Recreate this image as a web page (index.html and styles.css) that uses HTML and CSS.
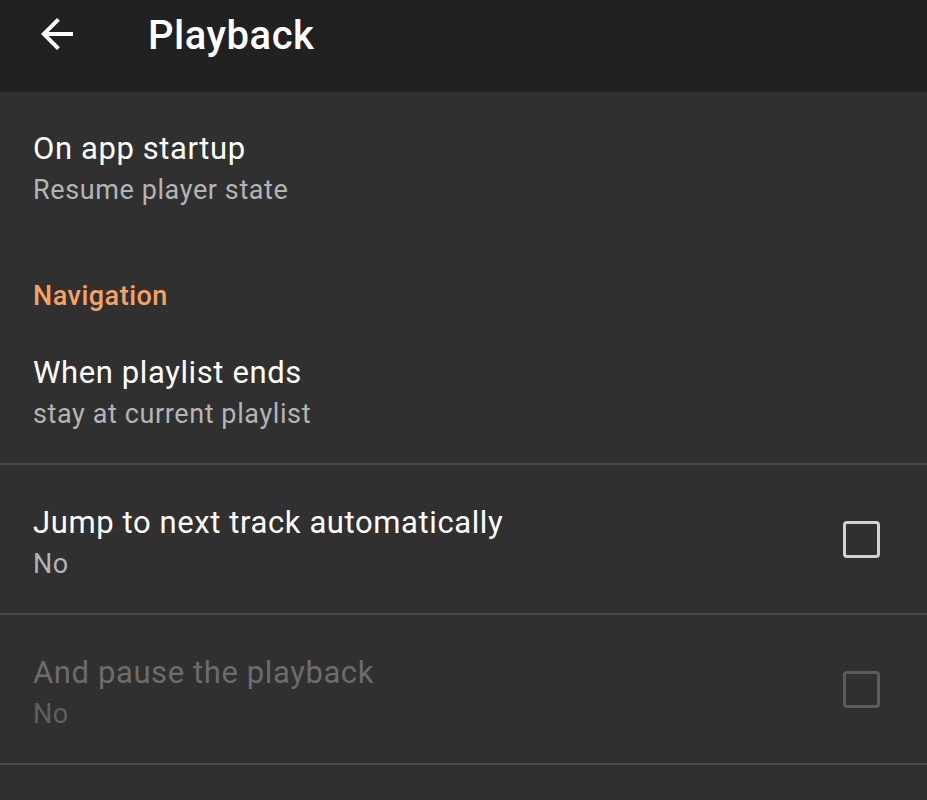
FILE: index.html
```html
<!DOCTYPE html>
<html>
<head>
<meta charset="utf-8">
<link rel="stylesheet" href="styles.css">
</head>
<body>
<div class="app">
  <header class="toolbar">
    <button class="back" aria-label="Back">
      <svg width="48" height="48" viewBox="0 0 24 24"><path d="M20 11H7.83l5.59-5.59L12 4l-8 8 8 8 1.41-1.41L7.83 13H20v-2z" fill="#fff"/></svg>
    </button>
    <h1 class="title">Playback</h1>
  </header>
  <main class="prefs">
    <div class="pref pref-first">
      <div class="pref-text">
        <div class="pref-title">On app startup</div>
        <div class="pref-summary">Resume player state</div>
      </div>
    </div>
    <div class="category">Navigation</div>
    <div class="pref pref-nav divided">
      <div class="pref-text">
        <div class="pref-title">When playlist ends</div>
        <div class="pref-summary">stay at current playlist</div>
      </div>
    </div>
    <div class="pref pref-check divided">
      <div class="pref-text">
        <div class="pref-title">Jump to next track automatically</div>
        <div class="pref-summary">No</div>
      </div>
      <span class="checkbox"></span>
    </div>
    <div class="pref pref-check divided disabled">
      <div class="pref-text">
        <div class="pref-title">And pause the playback</div>
        <div class="pref-summary">No</div>
      </div>
      <span class="checkbox"></span>
    </div>
  </main>
</div>
</body>
</html>
```

FILE: styles.css
```css
* { box-sizing: border-box; }
html, body { margin: 0; padding: 0; }
body {
  background: #303030;
  font-family: Roboto, "Noto Sans", sans-serif;
  color: #fff;
  width: 927px;
  height: 800px;
  overflow: hidden;
}
.toolbar {
  height: 92px;
  background: #212121;
  display: flex;
  align-items: flex-start;
}
.back {
  background: none;
  border: 0;
  padding: 0;
  margin: 10px 0 0 33px;
  width: 48px;
  height: 48px;
  display: flex;
}
.title {
  margin: 13px 0 0 67px;
  font-size: 40px;
  font-weight: 500;
  letter-spacing: 0.5px;
  line-height: 46px;
  color: #fff;
}
.prefs { display: flex; flex-direction: column; }
.pref {
  display: flex;
  align-items: center;
  padding-left: 33px;
  padding-right: 47px;
}
.pref-text { flex: 1; }
.pref-title {
  font-size: 31px;
  letter-spacing: 0.6px;
  line-height: 36px;
  color: #fff;
}
.pref-summary {
  font-size: 27px;
  letter-spacing: 0.6px;
  line-height: 32px;
  margin-top: 7px;
  color: #b4b4b4;
}
.pref-first { padding-top: 39px; }
.category {
  margin-top: 74px;
  padding-left: 33px;
  font-size: 27px;
  letter-spacing: 0.5px;
  line-height: 32px;
  font-weight: 500;
  color: #f7a164;
}
.pref-nav { padding-top: 43px; padding-bottom: 33px; }
.divided { border-bottom: 2px solid #4a4a4a; }
.pref-check { padding-top: 40px; padding-bottom: 33px; }
.checkbox {
  width: 37px;
  height: 37px;
  margin-top: -7px;
  border: 3.5px solid #d2d2d2;
  border-radius: 4px;
  flex: none;
}
.disabled .pref-title { color: #6c6c6c; }
.disabled .pref-summary { color: #5f5f5f; }
.disabled .checkbox { border-color: #5c5c5c; }
```
